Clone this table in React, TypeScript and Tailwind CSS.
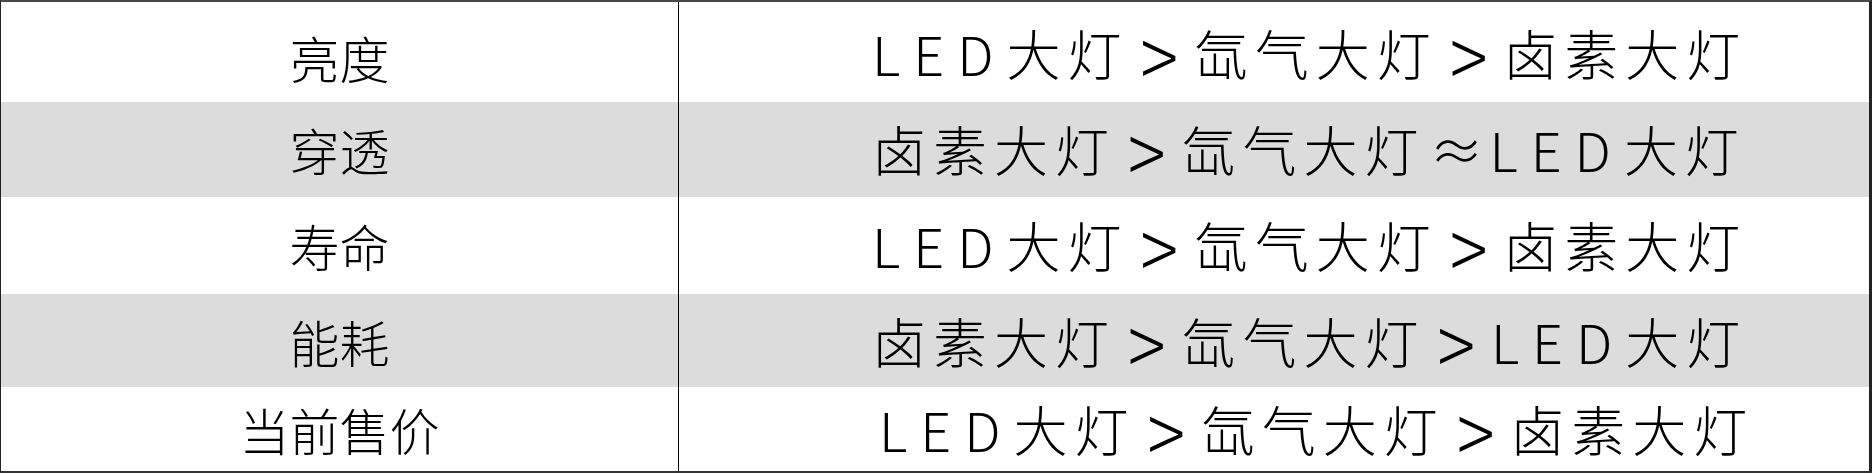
import React from "react";

type Row = { label: string; parts: string[]; sep: string[]; gray: boolean; h: string; pad: string; pt: string; rpt: string };

const rows: Row[] = [
  { label: "亮度", parts: ["LED大灯", "氙气大灯", "卤素大灯"], sep: [">", ">"], gray: false, h: "h-[100px]", pad: "pl-[193px]", pt: "pt-[10px]", rpt: "pt-[2px]" },
  { label: "穿透", parts: ["卤素大灯", "氙气大灯", "LED大灯"], sep: [">", "≈"], gray: true, h: "h-[96px]", pad: "pl-[193px]", pt: "pt-0", rpt: "pt-0" },
  { label: "寿命", parts: ["LED大灯", "氙气大灯", "卤素大灯"], sep: [">", ">"], gray: false, h: "h-[97px]", pad: "pl-[193px]", pt: "pt-0", rpt: "pt-0" },
  { label: "能耗", parts: ["卤素大灯", "氙气大灯", "LED大灯"], sep: [">", ">"], gray: true, h: "h-[94px]", pad: "pl-[193px]", pt: "pt-0", rpt: "pt-0" },
  { label: "当前售价", parts: ["LED大灯", "氙气大灯", "卤素大灯"], sep: [">", ">"], gray: false, h: "h-[84px]", pad: "pl-[200px]", pt: "pt-0", rpt: "pt-0" },
];

function Part({ t }: { t: string }) {
  if (t.startsWith("LED")) {
    return (
      <span className="tracking-[7px]">
        <span className="tracking-[13px]">LED</span>
        {t.slice(3)}
      </span>
    );
  }
  return <span className="tracking-[7px]">{t}</span>;
}

function Sep({ s }: { s: string }) {
  if (s === ">") {
    return (
      <span className="inline-block text-[70px] leading-[40px] font-extralight tracking-normal ml-[12px] mr-[16px] align-[-6px] scale-y-[1.2]">
        &gt;
      </span>
    );
  }
  return <span className="inline-block tracking-normal ml-[4px] mr-[6px]">≈</span>;
}

export default function App() {
  return (
    <div
      className="w-[1872px] h-[473px] bg-white border-t-2 border-t-[#4a4a4a] border-b-2 border-b-[#333333] border-l border-l-[#222222] border-r-[3px] border-r-[#222222] flex flex-col overflow-hidden"
      style={{ fontFamily: '"Noto Sans CJK SC", "Noto Sans", sans-serif' }}
    >
      {rows.map((r, i) => (
        <div key={i} className={`flex ${r.h} ${r.gray ? "bg-[#dcdcdc]" : "bg-white"}`}>
          <div className={`w-[677px] shrink-0 flex items-center justify-center ${r.pt} text-[50px] font-light text-black leading-none`}>
            {r.label}
          </div>
          <div className="w-px shrink-0 bg-black" />
          <div className={`flex-1 flex items-center justify-start ${r.pad} ${r.rpt} text-[54px] font-light text-black leading-none whitespace-pre`}>
            <Part t={r.parts[0]} />
            <Sep s={r.sep[0]} />
            <Part t={r.parts[1]} />
            <Sep s={r.sep[1]} />
            <Part t={r.parts[2]} />
          </div>
        </div>
      ))}
    </div>
  );
}
